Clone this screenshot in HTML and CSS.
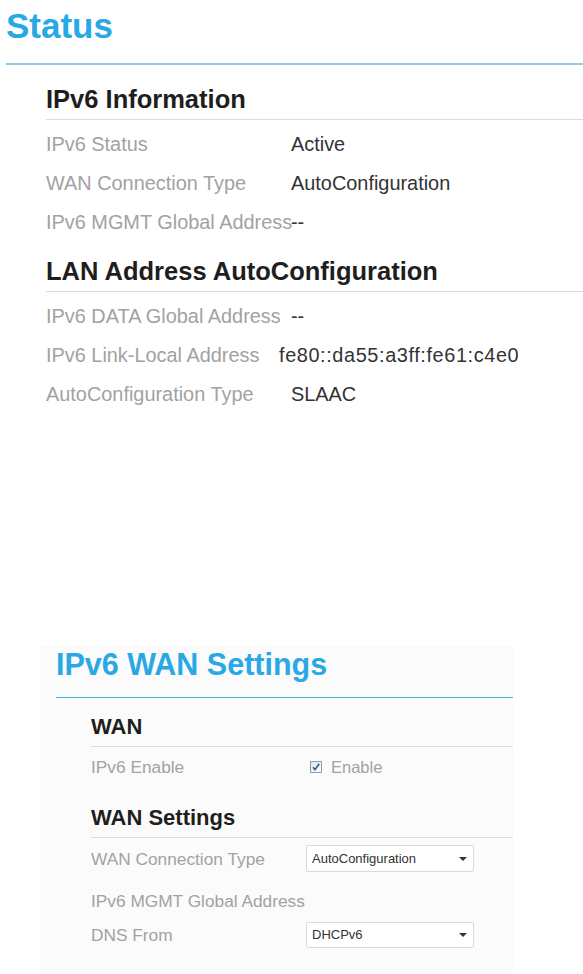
FILE: index.html
```html
<!DOCTYPE html>
<html>
<head>
<meta charset="utf-8">
<link rel="stylesheet" href="styles.css">
</head>
<body>
<section class="status">
  <div class="page-head"><h1 class="page-title">Status</h1></div>
  <div class="block">
    <h2 class="sub-title">IPv6 Information</h2>
    <div class="row"><span class="label">IPv6 Status</span><span class="value">Active</span></div>
    <div class="row"><span class="label">WAN Connection Type</span><span class="value">AutoConfiguration</span></div>
    <div class="row"><span class="label">IPv6 MGMT Global Address</span><span class="value">--</span></div>
    <h2 class="sub-title sub-title-next">LAN Address AutoConfiguration</h2>
    <div class="row"><span class="label">IPv6 DATA Global Address</span><span class="value">--</span></div>
    <div class="row"><span class="label">IPv6 Link-Local Address</span><span class="value value-addr">fe80::da55:a3ff:fe61:c4e0</span></div>
    <div class="row"><span class="label">AutoConfiguration Type</span><span class="value">SLAAC</span></div>
  </div>
</section>

<section class="panel">
  <div class="panel-head"><h1 class="panel-title">IPv6 WAN Settings</h1></div>
  <div class="panel-body">
    <h2 class="p-sub">WAN</h2>
    <div class="p-row p-row-first">
      <span class="p-label">IPv6 Enable</span>
      <span class="check">
        <svg width="12" height="12" viewBox="0 0 12 12">
          <defs>
            <linearGradient id="cbg" x1="0" y1="0" x2="1" y2="1">
              <stop offset="0" stop-color="#dfe3ea"/>
              <stop offset="1" stop-color="#ffffff"/>
            </linearGradient>
          </defs>
          <rect x="0.5" y="0.5" width="11" height="11" fill="url(#cbg)" stroke="#8e9cb0"/>
          <path d="M3 6.2 L5 8.6 L9.2 2.8" fill="none" stroke="#3b5a9a" stroke-width="1.6"/>
        </svg>
      </span>
      <span class="p-value">Enable</span>
    </div>
    <h2 class="p-sub p-sub-next">WAN Settings</h2>
    <div class="p-row p-row-sel first-sel">
      <span class="p-label">WAN Connection Type</span>
      <div class="select"><span class="select-text">AutoConfiguration</span><span class="caret"></span></div>
    </div>
    <div class="p-row p-row-text">
      <span class="p-label">IPv6 MGMT Global Address</span>
    </div>
    <div class="p-row p-row-sel last-sel">
      <span class="p-label">DNS From</span>
      <div class="select"><span class="select-text">DHCPv6</span><span class="caret"></span></div>
    </div>
  </div>
</section>
</body>
</html>
```

FILE: styles.css
```css
html, body {
  margin: 0;
  padding: 0;
  background: #ffffff;
  font-family: "Liberation Sans", Arial, sans-serif;
}

.page-head {
  margin-left: 6px;
  padding-top: 6px;
  padding-bottom: 17px;
  border-bottom: 2px solid #8fcbe8;
}

.page-title {
  margin: 0;
  font-size: 35px;
  line-height: 40px;
  font-weight: bold;
  color: #29a8e6;
}

.block {
  margin-left: 46px;
}

.sub-title {
  margin: 20px 0 0 0;
  padding-bottom: 6px;
  font-size: 25.5px;
  line-height: 28px;
  font-weight: bold;
  color: #1e1e1e;
  border-bottom: 1px solid #dcdcdc;
}

.sub-title-next {
  margin-top: 15px;
}

.sub-title + .row {
  margin-top: 5px;
}

.row {
  display: flex;
  height: 39px;
  font-size: 19.9px;
  line-height: 39px;
  white-space: nowrap;
}

.label {
  width: 245px;
  flex: none;
  color: #a2a2a2;
}

.value {
  color: #333333;
}

.value-addr {
  margin-left: -12px;
  letter-spacing: 0.6px;
}

/* second screenshot */
.panel {
  margin: 232px 0 0 40px;
  width: 473px;
  min-height: 330px;
  background: #fbfbfb;
  padding-top: 2px;
}

.panel-head {
  margin-left: 16px;
  padding-bottom: 17px;
  border-bottom: 1px solid #45aee0;
}

.panel-title {
  margin: 0;
  font-size: 30.5px;
  line-height: 32px;
  font-weight: bold;
  color: #29a8e6;
}

.panel-body {
  margin-left: 51px;
}

.p-sub {
  margin: 16px 0 0 0;
  padding-bottom: 6px;
  font-size: 22px;
  line-height: 26px;
  font-weight: bold;
  color: #1e1e1e;
  border-bottom: 1px solid #dcdcdc;
}

.p-sub-next {
  margin-top: 26px;
}

.p-row {
  display: flex;
  align-items: center;
  font-size: 17.3px;
  line-height: 24px;
  white-space: nowrap;
}

.p-row-first {
  margin-top: 8px;
  height: 24px;
}

.p-row-text {
  margin-top: 17px;
  height: 24px;
}

.first-sel {
  margin-top: 7px;
}

.last-sel {
  margin-top: 9px;
}

.p-label {
  width: 215px;
  flex: none;
  color: #a2a2a2;
}

.check {
  display: flex;
  width: 12px;
  height: 12px;
  margin-left: 4px;
  margin-right: 9px;
}

.p-value {
  color: #a2a2a2;
  font-size: 16.5px;
}

.select {
  display: flex;
  align-items: center;
  justify-content: space-between;
  box-sizing: border-box;
  width: 168px;
  height: 27px;
  padding: 0 6px 0 5px;
  background: #ffffff;
  border: 1px solid #dadada;
  border-radius: 2px;
}

.last-sel .select {
  height: 26px;
}

.select-text {
  font-size: 13px;
  color: #333333;
}

.caret {
  width: 0;
  height: 0;
  border-left: 4px solid transparent;
  border-right: 4px solid transparent;
  border-top: 4px solid #333333;
}
```
